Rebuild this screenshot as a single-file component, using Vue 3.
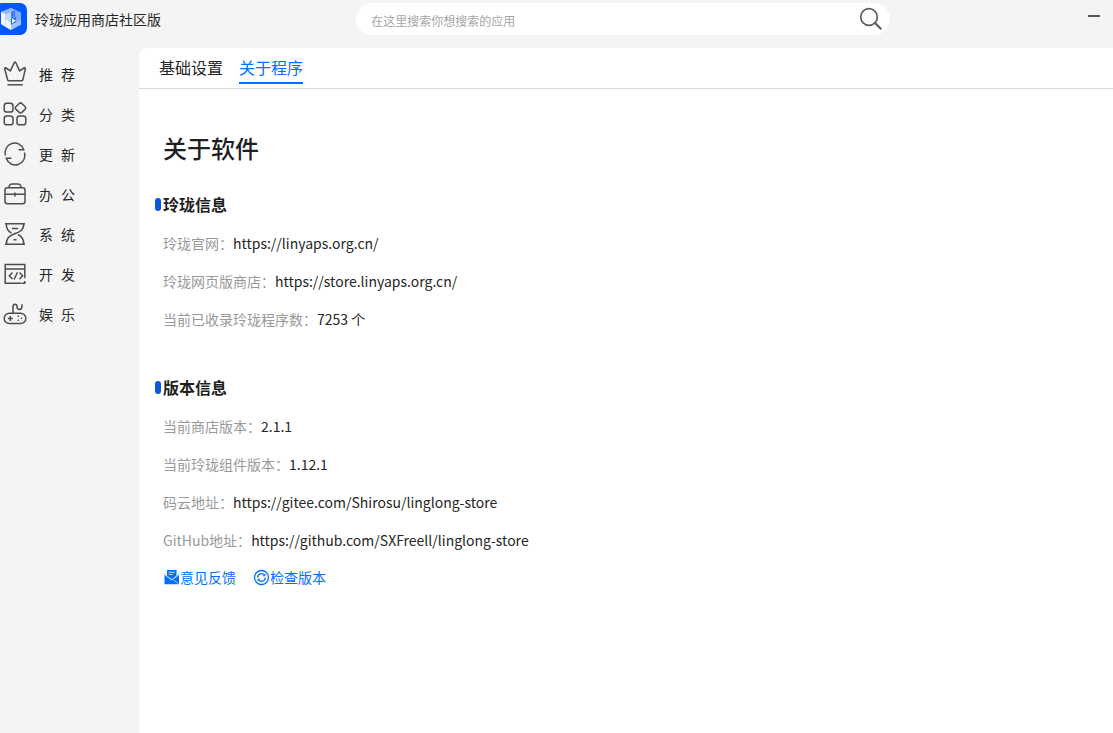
<template>
    <div class="app">
        <header class="topbar">
            <div class="brand">
                <svg class="logo" viewBox="5 0 27 32" aria-hidden="true">
                    <rect width="32" height="32" rx="7" fill="#0059ff" />
                    <path d="M6 9l10-4 10 4.500v12L16 27 6 21z" fill="#7fabff" />
                    <path d="M6 9l10-4 5 2.200L12 12z" fill="#8fb8ff" />
                    <path d="M6 9l4.500 2v13L6 21z" fill="#f4f8ff" />
                    <path d="M10.500 11.500L16 9v9l-5.500-2z" fill="#c4dbff" />
                    <path d="M16 9l4-2v6l-4 3z" fill="#3d7fff" />
                    <path d="M10.500 16l5.500 3v8l-5.500-3z" fill="#f0f6ff" />
                    <path d="M16 16l5-2v5l-5 3z" fill="#1d6aff" />
                    <path d="M17 15.500l4 2-4 3z" fill="#fff" />
                    <path d="M16 22l10-5v4.500L16 27z" fill="#a3c5ff" />
                </svg>
                <span>玲珑应用商店社区版</span>
            </div>
            <form class="search" @submit.prevent>
                <input v-model="keyword" type="text" aria-label="搜索应用" placeholder="在这里搜索你想搜索的应用" />
                <button type="submit" aria-label="搜索">
                    <svg viewBox="0 0 24 24" fill="none" stroke="#5c5c5c" stroke-width="1.7">
                        <circle cx="10" cy="10" r="8.3" />
                        <path d="M15.8 15.8L22.3 22.3" stroke-width="2" />
                    </svg>
                </button>
            </form>
            <div class="window-actions">
                <button type="button" aria-label="最小化">
                    <svg viewBox="0 0 12 12"><rect y="5" width="12" height="2" fill="#555" /></svg>
                </button>
            </div>
        </header>

        <div class="body">
            <nav class="sidebar">
                <a v-for="item in menus" :key="item.name" href="#" class="menu-item" @click.prevent>
                    <svg viewBox="0 0 24 24" aria-hidden="true">
                        <path v-for="(d, i) in item.paths" :key="i" :d="d" />
                    </svg>
                    <span class="menu-text">
                        <span v-for="char in item.name" :key="char">{{ char }}</span>
                    </span>
                </a>
            </nav>

            <main class="panel">
                <div class="tabs" role="tablist">
                    <button v-for="tab in tabs" :key="tab" type="button" role="tab" class="tab"
                        :class="{ active: currentTab === tab }" :aria-selected="currentTab === tab"
                        @click="currentTab = tab">{{ tab }}</button>
                </div>

                <div class="content">
                    <h1>关于软件</h1>

                    <section v-for="section in sections" :key="section.title">
                        <h2>{{ section.title }}</h2>
                        <p v-for="row in section.rows" :key="row.label" class="row">
                            <span class="label">{{ row.label }}：</span>
                            <a v-if="row.link" :href="row.value">{{ row.value }}</a>
                            <span v-else>{{ row.value }}</span>
                        </p>
                    </section>

                    <div class="actions">
                        <button type="button">
                            <svg viewBox="0 0 17 17" aria-hidden="true">
                                <path d="M4 1h9.5v5.6L8.8 10.2 4 6.8z" fill="#0070ff" />
                                <path d="M5.8 3.3h6M5.8 5.4h4" stroke="#fff" stroke-width=".8" />
                                <path d="M1.5 5.2L8.7 10.7 16 5.2V15.2H1.5z" fill="#0070ff" />
                                <path d="M1.8 6l7 5 7-5M10.3 10.8l5.2 4" stroke="#fff" fill="none" stroke-width=".6" />
                            </svg>
                            意见反馈
                        </button>
                        <button type="button">
                            <svg viewBox="0 0 17 17" fill="none" stroke="#0070ff" stroke-width="1.3" aria-hidden="true">
                                <circle cx="8.5" cy="8.5" r="7" />
                                <path d="M4.6 8.6a3.9 3.9 0 0 1 7-2.3M12.4 8.4a3.9 3.9 0 0 1-7 2.300" />
                                <path d="M12 4.800v2h-2M5 12.200v-2h2" stroke-width="1" />
                            </svg>
                            检查版本
                        </button>
                    </div>
                </div>
            </main>
        </div>
    </div>
</template>

<script setup>
import { ref } from 'vue'

const keyword = ref('')
const tabs = ['基础设置', '关于程序']
const currentTab = ref('关于程序')

// Iconos del menú lateral, trazados sobre una caja de 24x24
const menus = [
    {
        name: '推荐',
        paths: [
            'M4.6 17.800L1.7 6.800Q1.5 5.2 3 6L7.4 8.800L11.2 .6Q12 -.4 12.8 .6L16.6 8.800L21 6Q22.5 5.2 22.3 6.800L19.9 17.800Q19.6 18.800 18.6 18.800H5.8Q4.9 18.800 4.6 17.800Z',
            'M4.5 22.8H19.8',
        ],
    },
    {
        name: '分类',
        paths: [
            'M3.8 1.3H7.4Q10 1.3 10 3.9V7.5Q10 10.1 7.4 10.1H3.8Q1.2 10.1 1.2 7.5V3.9Q1.2 1.3 3.8 1.3Z',
            'M16.2 1.5Q17.5 .3 18.8 1.5L22.2 4.7Q23.4 5.9 22.2 7.1L18.8 10.4Q17.5 11.5 16.2 10.4L12.8 7.1Q11.6 5.9 12.8 4.7Z',
            'M3.8 14H7.4Q10 14 10 16.6V20.2Q10 22.8 7.4 22.8H3.8Q1.2 22.8 1.2 20.2V16.6Q1.2 14 3.8 14Z',
            'M16.6 14H20.2Q22.8 14 22.8 16.6V20.2Q22.8 22.8 20.2 22.8H16.6Q14 22.8 14 20.2V16.6Q14 14 16.6 14Z',
        ],
    },
    {
        name: '更新',
        paths: [
            'M2.5 13.5A9.5 9.5 0 0 1 20.7 7.8H15.5',
            'M21.5 10.5A9.5 9.5 0 0 1 3.3 16.2H8.5',
        ],
    },
    {
        name: '办公',
        paths: [
            'M4.2 5.8H19.8Q22 5.8 22 8V19.6Q22 21.8 19.8 21.8H4.2Q2 21.8 2 19.6V8Q2 5.8 4.2 5.8Z',
            'M6 5.8V4.4Q6.8 2 8.8 2H15.2Q17.2 2 18 4.4V5.8',
            'M2 12.2H22M12 10.5V14.5',
        ],
    },
    {
        name: '系统',
        paths: [
            'M2 1.8H22M3.3 1.8C3.3 8 6 10 8.5 11M20.8 1.8C20.8 15 3.3 8 3.3 22.2M15 12.5C18 14 20.8 16.5 20.8 22.2M2 22.2H22',
            'M9 6.5H15.2M10.5 17.8H13.5',
        ],
    },
    {
        name: '开发',
        paths: [
            'M18.5 21.2H2.2V2.5H21.8V16.2M2.2 7H21.8M19 21.2H21.8V19',
            'M9.5 10.5L6.3 13.7L9.5 17M14.5 10.2L11 17.5M16.5 10.5L19.7 13.7L16.5 17',
        ],
    },
    {
        name: '娱乐',
        paths: [
            'M6.3 11.3H17.7A5 5 0 0 1 17.7 21.5H6.3A5 5 0 0 1 6.3 11.3Z',
            'M10 11.3V5.2Q10 2.3 12 2.3Q14 2.3 14 4.8Q14 7.4 16.5 7.4Q19 7.4 19 4.5V2.3',
            'M4.8 16.4H9.8M7.3 13.9V18.9M14.6 14.3H16M14.6 18.2H16M17.8 16.3H19.2',
        ],
    },
]

const sections = [
    {
        title: '玲珑信息',
        rows: [
            { label: '玲珑官网', value: 'https://linyaps.org.cn/', link: true },
            { label: '玲珑网页版商店', value: 'https://store.linyaps.org.cn/', link: true },
            { label: '当前已收录玲珑程序数', value: '7253 个' },
        ],
    },
    {
        title: '版本信息',
        rows: [
            { label: '当前商店版本', value: '2.1.1' },
            { label: '当前玲珑组件版本', value: '1.12.1' },
            { label: '码云地址', value: 'https://gitee.com/Shirosu/linglong-store', link: true },
            { label: 'GitHub地址', value: 'https://github.com/SXFreell/linglong-store', link: true },
        ],
    },
]
</script>

<style>
body {
    background: #f4f4f4;
}
</style>

<style scoped>
.app {
    display: flex;
    flex-direction: column;
    min-height: 100vh;
    background: #f4f4f4;
    color: #262626;
    font-family: "Noto Sans CJK SC", sans-serif;
    font-size: 14px;
    line-height: 20px;
}

button,
input {
    padding: 0;
    border: none;
    background: none;
    color: inherit;
    font: inherit;
}

button {
    cursor: pointer;
}

a {
    color: inherit;
    text-decoration: none;
}

svg {
    display: block;
    flex: none;
}

.topbar {
    display: grid;
    grid-template-columns: 32fr 48fr 20fr;
    align-items: center;
    padding: 3px 0 13px;
}

.brand {
    display: flex;
    align-items: center;
    gap: 8px;
}

.logo {
    width: 27px;
    height: 32px;
}

.search {
    display: flex;
    align-items: center;
    height: 32px;
    padding: 0 7px 0 15px;
    border-radius: 16px;
    background: #fff;
}

.search input {
    flex: 1;
    min-width: 0;
    padding-top: 3px;
    outline: none;
    font-size: 12px;
}

.search input::placeholder {
    color: #a6a6a6;
}

.search svg {
    width: 24px;
    height: 24px;
}

.window-actions {
    display: flex;
    justify-content: flex-end;
    padding: 0 13px 6px;
}

.window-actions svg {
    width: 12px;
    height: 12px;
}

.body {
    display: flex;
    flex: 1;
}

.sidebar {
    flex: none;
    width: 139px;
    padding-top: 6px;
}

.menu-item {
    display: flex;
    align-items: center;
    gap: 12px;
    height: 40px;
    padding-left: 3px;
}

.menu-item svg {
    width: 24px;
    height: 24px;
    overflow: visible;
    fill: none;
    stroke: #4d4d4d;
    stroke-width: 1.5;
}

.menu-text {
    display: flex;
    gap: 8px;
}

.panel {
    flex: 1;
    min-width: 0;
    border-top-left-radius: 8px;
    background: #fff;
}

.tabs {
    display: flex;
    gap: 16px;
    padding: 4px 20px;
    border-bottom: 1px solid #d9d9d9;
}

.tab {
    height: 32px;
    border-bottom: 2px solid transparent;
    font-size: 16px;
}

.tab.active {
    border-color: #0070ff;
    color: #0070ff;
}

.content {
    padding: 23px 24px;
}

h1 {
    margin: 0;
    color: #1f1f1f;
    font-size: 24px;
    font-weight: 500;
    line-height: 72px;
}

h2 {
    display: flex;
    align-items: center;
    gap: 2px;
    margin: 0 0 0 -8px;
    color: #1f1f1f;
    font-size: 16px;
    font-weight: 700;
    line-height: 40px;
}

h2::before {
    content: "";
    width: 6px;
    height: 13px;
    border-radius: 3px;
    background: #0758dc;
}

section + section {
    margin-top: 29px;
}

.row {
    display: flex;
    margin: 0;
    line-height: 38px;
}

.label {
    color: #999;
}

.actions {
    display: flex;
    gap: 17px;
    color: #0070ff;
}

.actions button {
    display: flex;
    align-items: center;
    height: 36px;
}

.actions svg {
    width: 17px;
    height: 17px;
}
</style>
